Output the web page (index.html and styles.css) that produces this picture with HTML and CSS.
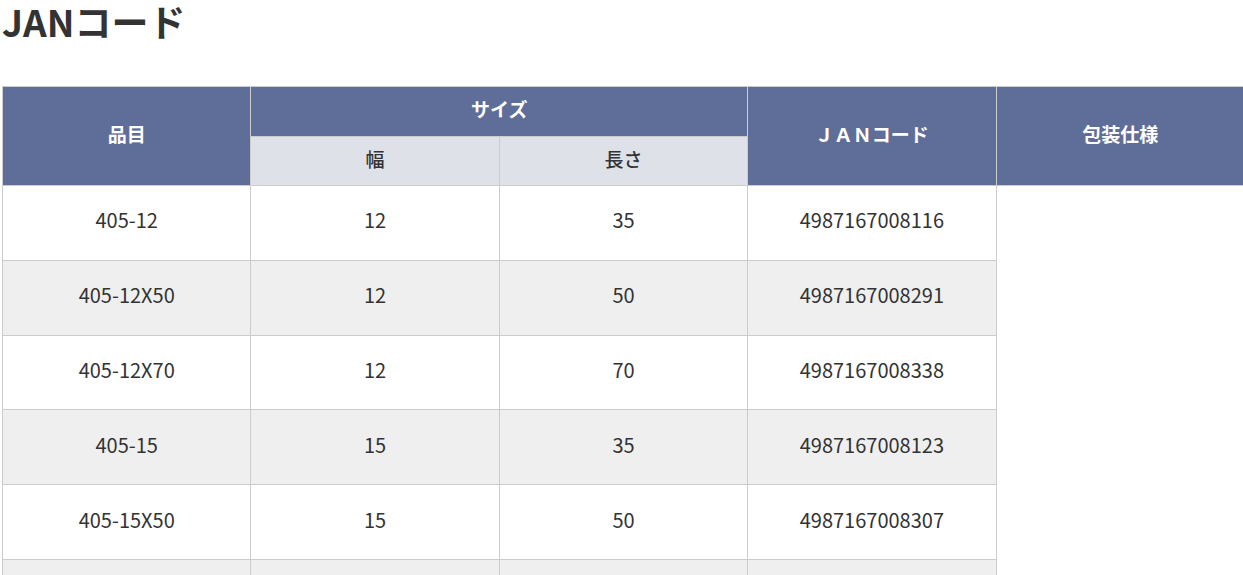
FILE: index.html
```html
<!DOCTYPE html>
<html lang="ja">
<head>
<meta charset="utf-8">
<title>JANコード</title>
<link rel="stylesheet" href="styles.css">
</head>
<body>
<main class="page">
  <h1 class="title">JANコード</h1>
  <table class="jan">
    <thead>
      <tr>
        <th rowspan="2" class="h-main">品目</th>
        <th colspan="2" class="h-main h-short">サイズ</th>
        <th rowspan="2" class="h-main">ＪＡＮコード</th>
        <th rowspan="2" class="h-main">包装仕様</th>
      </tr>
      <tr>
        <th class="h-sub">幅</th>
        <th class="h-sub">長さ</th>
      </tr>
    </thead>
    <tbody>
      <tr><td>405-12</td><td>12</td><td>35</td><td>4987167008116</td><td rowspan="6" class="pack"></td></tr>
      <tr class="alt"><td>405-12X50</td><td>12</td><td>50</td><td>4987167008291</td></tr>
      <tr><td>405-12X70</td><td>12</td><td>70</td><td>4987167008338</td></tr>
      <tr class="alt"><td>405-15</td><td>15</td><td>35</td><td>4987167008123</td></tr>
      <tr><td>405-15X50</td><td>15</td><td>50</td><td>4987167008307</td></tr>
      <tr class="alt"><td>405-15X70</td><td>15</td><td>70</td><td>4987167008345</td></tr>
    </tbody>
  </table>
</main>
</body>
</html>
```

FILE: styles.css
```css
html, body {
  margin: 0;
  padding: 0;
  overflow: hidden;
  background: #fff;
}
body {
  font-family: "Noto Sans CJK JP", "Noto Sans", sans-serif;
  color: #333;
}
.page {
  padding: 0 0 0 2px;
}
.title {
  margin: 0;
  font-size: 37px;
  font-weight: 700;
  line-height: 42px;
  color: #333;
  height: 86px;
}
.jan {
  border-collapse: collapse;
  table-layout: fixed;
  width: 1243px;
}
.jan th, .jan td {
  border: 1px solid #cccccc;
  text-align: center;
  vertical-align: middle;
  padding: 0 0 5px;
  line-height: 26px;
}
.h-main {
  background: #5f6e98;
  color: #fff;
  font-size: 19px;
  font-weight: 700;
  height: 44px;
}
.h-sub {
  background: #dee1e8;
  color: #333;
  font-size: 19px;
  font-weight: 500;
  height: 43px;
}
.jan td {
  font-size: 20px;
  font-weight: 400;
  height: 68.8px;
  background: #fff;
}
.jan tr.alt td {
  background: #efefef;
}
.jan td.pack {
  background: #fff;
  border-top: none;
  border-right: none;
  border-bottom: none;
}
```
